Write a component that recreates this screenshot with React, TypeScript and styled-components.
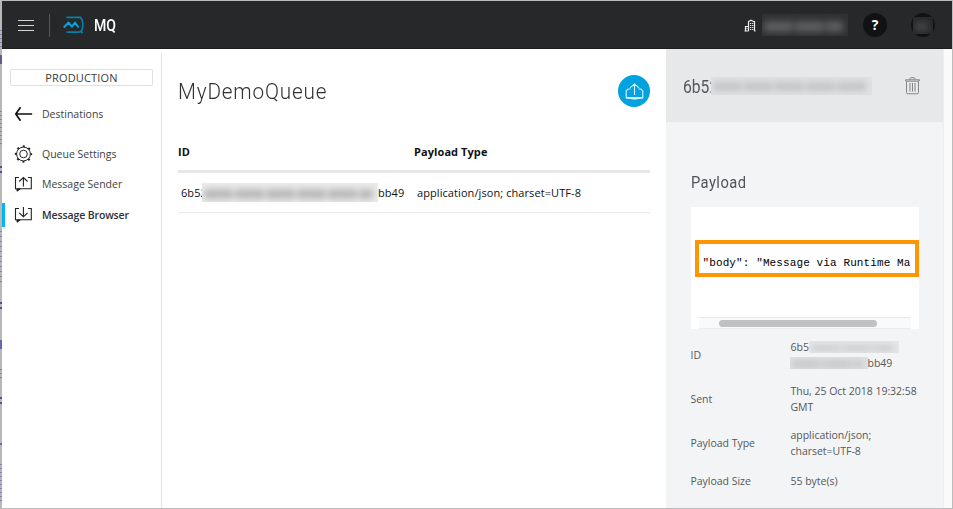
import React from 'react';
import styled, { createGlobalStyle, css } from 'styled-components';

const Global = createGlobalStyle`
  *, *::before, *::after { box-sizing: border-box; }
  html, body { margin: 0; padding: 0; overflow: hidden; }
  body { font-family: "Open Sans", "Noto Sans", sans-serif; font-size: 11px; color: #3a3b3c; background: #fff; }
  svg { display: block; flex: none; }
`;

const Frame = styled.div`
  width: 953px;
  height: 509px;
  display: grid;
  grid-template-columns: 2px 950px 1px;
  grid-template-rows: 1px 507px 1px;
  background: #bcbcbc;
`;
const Edge = styled.div`
  grid-row: 2;
  background:
    linear-gradient(#54509a, #54509a) 0 301px / 2px 2px no-repeat,
    linear-gradient(#54509a, #54509a) 0 306px / 2px 2px no-repeat,
    linear-gradient(#6668ae, #6668ae) 0 339px / 2px 9px no-repeat,
    linear-gradient(#54509a, #54509a) 0 396px / 2px 2px no-repeat,
    linear-gradient(#54509a, #54509a) 0 401px / 2px 2px no-repeat,
    linear-gradient(#6a68a0, #6a68a0) 0 442px / 2px 2px no-repeat,
    repeating-linear-gradient(#8582ad 0 1px, #b5b5b8 1px 4px) 0 463px / 2px 38px no-repeat,
    repeating-linear-gradient(#8582ad 0 1px, #b5b5b8 1px 4px) 0 368px / 2px 12px no-repeat,
    repeating-linear-gradient(#8582ad 0 1px, #b5b5b8 1px 5px) 0 230px / 2px 54px no-repeat,
    linear-gradient(#54509a, #54509a) 0 165px / 2px 2px no-repeat,
    linear-gradient(#54509a, #54509a) 0 170px / 2px 2px no-repeat,
    repeating-linear-gradient(#8582ad 0 1px, #b5b5b8 1px 4px) 0 110px / 2px 36px no-repeat,
    linear-gradient(#5f5a9c, #5f5a9c) 0 54px / 2px 9px no-repeat,
    repeating-linear-gradient(#8582ad 0 1px, #b5b5b8 1px 4px) 0 29px / 2px 20px no-repeat,
    #b8b8b8;
`;
const Window = styled.div`
  grid-column: 2;
  grid-row: 2;
  display: grid;
  grid-template-rows: 48px 459px;
  background: #fff;
`;
const Header = styled.header`
  display: flex;
  align-items: center;
  background: #27282a;
  border-bottom: 1px solid #1d1d1e;
  padding-left: 16px;
  color: #fff;
`;
const Divider = styled.div`
  width: 1px;
  height: 23px;
  margin: 1px 13px 0 15px;
  background: #56575a;
`;
const Brand = styled.span`
  margin-left: 10px;
  font: 500 16px/20px Roboto, sans-serif;
  transform: scaleX(0.88);
  transform-origin: left;
  padding-top: 3px;
`;
const Tools = styled.div`
  display: flex;
  align-items: center;
  margin-left: auto;
  padding: 1px 17px 0 0;
`;
const Circle = styled.div<{ $left?: number }>`
  width: 24px;
  height: 24px;
  margin-left: ${p => p.$left ?? 0}px;
  border-radius: 50%;
  background: #111213;
  display: flex;
  align-items: center;
  justify-content: center;
  font: 700 14px/24px "Open Sans", sans-serif;
  color: #fff;
`;

const Redaction = styled.span<{ $w: number; $h: number; $bg: string; $ink: string; $left?: number; $right?: number }>`
  display: inline-block;
  flex: none;
  position: relative;
  width: ${p => p.$w}px;
  height: ${p => p.$h}px;
  margin-left: ${p => p.$left ?? 0}px;
  margin-right: ${p => p.$right ?? 0}px;
  overflow: hidden;
  background: ${p => p.$bg};
  &::before {
    content: "";
    display: block;
    height: ${p => Math.round(p.$h * 0.5)}px;
    margin: ${p => Math.round(p.$h * 0.3)}px 5px 0 2px;
    background: repeating-linear-gradient(90deg, ${p => p.$ink} 0 29px, transparent 29px 31px);
    filter: blur(3px);
  }
`;

const Columns = styled.div`
  display: grid;
  grid-template-columns: 160px 504px 278px 8px;
`;
const Sidebar = styled.nav`
  margin-top: 4px;
  padding-top: 16px;
  border-right: 1px solid #e3e4e5;
  font-size: 10.5px;
`;
const Environment = styled.div`
  width: 143px;
  height: 17px;
  margin: 0 0 16px 8px;
  border: 1px solid #dfe0e1;
  border-radius: 2px;
  text-align: center;
  font-size: 11px;
  line-height: 15px;
  letter-spacing: 0.15px;
`;
const NavItem = styled.a<{ $active?: boolean; $gap?: number }>`
  display: flex;
  align-items: center;
  height: 24px;
  margin-bottom: ${p => p.$gap ?? 6}px;
  padding-left: ${p => (p.$active ? 9 : 12)}px;
  gap: 9px;
  color: #3e3f41;
  ${p => p.$active && css`
    border-left: 3px solid #00b5f1;
    font-weight: 600;
    letter-spacing: -0.12px;
    color: #303133;
  `}
`;

const Main = styled.main`
  padding: 26px 16px 0;
`;
const TitleRow = styled.div`
  display: flex;
  align-items: center;
  justify-content: space-between;
  height: 32px;
`;
const Title = styled.h1`
  margin: 2px 0 0;
  font: 300 22px/32px Roboto, sans-serif;
  letter-spacing: 0.9px;
  transform: scaleX(0.94);
  transform-origin: left;
  color: #303133;
`;
const Action = styled.button`
  width: 32px;
  height: 32px;
  padding: 0;
  border: 0;
  border-radius: 50%;
  background: #00a2df;
  display: flex;
  align-items: center;
  justify-content: center;
`;
const Row = styled.div<{ $head?: boolean }>`
  display: grid;
  grid-template-columns: 236px 1fr;
  align-items: center;
  letter-spacing: 0.08px;
  color: #111;
  ${p => p.$head ? css`
    height: 39px;
    margin-top: 27px;
    padding-bottom: 1px;
    border-bottom: 3px solid #e7e7e7;
    font-weight: 700;
  ` : css`
    height: 40px;
    padding-left: 3px;
    border-bottom: 1px solid #e9e9e9;
  `}
`;
const Inline = styled.span`
  display: flex;
  align-items: center;
  white-space: nowrap;
`;

const Panel = styled.aside`
  background: #f3f4f6;
  border-right: 1px solid #eeeff0;
`;
const PanelHead = styled.div`
  display: flex;
  align-items: center;
  height: 73px;
  padding: 0 23px 0 17px;
  background: #e7e8ea;
  color: #55575a;
  & > svg { margin-left: auto; }
`;
const Condensed = styled.span`
  width: 34px;
  padding-top: 3px;
  font: 400 18px/24px Roboto, sans-serif;
  transform: scaleX(0.87);
  transform-origin: left;
`;
const PanelBody = styled.div`
  padding: 49px 24px 0;
`;
const SubTitle = styled.h2`
  margin: 0 0 12px;
  padding-left: 1px;
  font: 400 16px/24px Roboto, sans-serif;
  letter-spacing: 0.5px;
  transform: scaleX(0.92);
  transform-origin: left;
  color: #515356;
`;
const CodeBox = styled.div`
  display: flex;
  flex-direction: column;
  width: 228px;
  height: 122px;
  margin-left: 1px;
  padding-top: 33px;
  background: #fff;
`;
const CodeLine = styled.code`
  width: 224px;
  height: 37px;
  margin-left: 4px;
  border: 4px solid #ff9500;
  padding: 1px 0 0 3.5px;
  font: 11px/36px "Liberation Mono", monospace;
  letter-spacing: 0.11px;
  white-space: pre;
  color: #000;
`;
const ScrollTrack = styled.div`
  width: 212px;
  height: 12px;
  margin: auto 0 0 8px;
  padding: 2px 0 0 20px;
  background: #fafafa;
  border-top: 1px solid #e7e7e7;
  border-bottom: 1px solid #ececec;
`;
const ScrollThumb = styled.div`
  width: 158px;
  height: 7px;
  border-radius: 4px;
  background: #c1c1c1;
`;
const Details = styled.dl`
  display: grid;
  grid-template-columns: 100px 1fr;
  row-gap: 12px;
  align-items: center;
  margin: 10px 0 0 0.5px;
  font-size: 10.5px;
  letter-spacing: -0.02px;
  line-height: 16px;
  color: #55575a;
  & > :nth-last-child(-n + 2) { padding-top: 2px; }
`;
const Term = styled.dt``;
const Value = styled.dd`
  margin: 0;
  white-space: nowrap;
`;
const Gutter = styled.div`
  background: #fafafa;
`;

const MenuIcon = () => (
  <svg width="16" height="14" viewBox="0 0 16 14" stroke="#d4d4d5" strokeWidth="1"><path d="M0 2.5h16M0 7.5h16M0 12.5h16" /></svg>
);
const LogoIcon = () => (
  <svg width="21" height="20" viewBox="0 0 21 20" fill="none">
    <path d="M3.5 2.3h14Q19.8 4.5 19.8 9.5t-1.6 6.6l1.2 2.3M3.5 17.2h12.3q1.6 0 2.4-1.1" stroke="#087ea8" strokeWidth="1.7" />
    <path d="M.7 12.5 5.5 7.6l3.4 4.1L12 7.6l3.6 4.9" stroke="#00a8e8" strokeWidth="1.9" strokeLinejoin="round" />
  </svg>
);
const BuildingIcon = () => (
  <svg width="12" height="13" viewBox="0 0 12 13" fill="none" stroke="#ededed">
    <path d="M4.5 12V2.5L7 1.2l2.5 1.3h1V12M1.5 12V7.5h3M.5 12h4M10 12h1.5" strokeWidth="1.2" />
    <path d="M6 4.5h3.5M6 6.5h3.5M6 8.5h3.5M6 10.5h3.5" strokeDasharray="1.3 .8" />
    <path d="M3 9v1" />
  </svg>
);
const BackIcon = () => (
  <svg width="19" height="16" viewBox="0 0 19 16" fill="none" stroke="#111" strokeWidth="1.7"><path d="M6.5 1.2 1.8 8l4.7 6.8M1.6 8h16.6" /></svg>
);
const GearIcon = () => (
  <svg width="19" height="18" viewBox="0 0 19 18" fill="none" stroke="#222">
    <circle cx="9.5" cy="9" r="6.9" />
    <circle cx="9.5" cy="9" r="3.8" />
    <circle cx="9.5" cy="9" r="7.8" strokeWidth="1.7" strokeDasharray="2.1 4.026" strokeDashoffset="1.05" />
  </svg>
);
const MessageIcon = ({ down }: { down?: boolean }) => (
  <svg width="19" height="18" viewBox="0 0 19 18" fill="none" stroke="#222">
    <path d="M5 2.5H1.5v11.2h15.8V2.5H14" strokeWidth="1.1" />
    <path d="M3 14v2.2l3.2-2.2Z" fill="#111" />
    {down ? <path d="M9.4 1v9.5M5.2 6.8l4.2 3.9 4.2-3.9" strokeWidth="1.1" /> : <path d="M9.4 11.5V2.5M5.2 6.5l4.2-3.9 4.2 3.9" strokeWidth="1.1" />}
  </svg>
);
const SendIcon = () => (
  <svg width="19" height="19" viewBox="0 0 19 19" fill="none" stroke="#d9f3fd">
    <path d="M9.5 13V2M5 5.8 9.5 2 14 5.8M5.5 7H3.2L1.2 8.7v7.1h16.6V8.7l-2-1.7h-2.3" strokeWidth="1.1" />
    <path d="M1.2 15.8q8.3 2.8 16.6 0Z" fill="#d9f3fd" />
  </svg>
);
const TrashIcon = () => (
  <svg width="15" height="18" viewBox="0 0 15 18" fill="none" stroke="#858688">
    <path d="M.5 2.8h14M5 2.3q0-1.6 1-1.6h3q1 0 1 1.6M.5 2.8l.5 1.4h13l.5-1.4M1.5 4.5v11q0 1.3 1.5 1.3h9q1.5 0 1.5-1.3v-11" />
    <path d="M5 6v8.5M7.5 6v8.5M10 6v8.5" />
  </svg>
);

export default function App() {
  return (
    <Frame>
      <Global />
      <Edge />
      <Window>
        <Header>
          <MenuIcon />
          <Divider />
          <LogoIcon />
          <Brand>MQ</Brand>
          <Tools>
            <BuildingIcon />
            <Redaction $w={86} $h={22} $bg="#303133" $ink="#5b5c5e" $left={6} $right={15} />
            <Circle>?</Circle>
            <Circle $left={24}>
              <Redaction $w={20} $h={17} $bg="#27282a" $ink="#434446" />
            </Circle>
          </Tools>
        </Header>
        <Columns>
          <Sidebar>
            <Environment>PRODUCTION</Environment>
            <NavItem $gap={16}><BackIcon />Destinations</NavItem>
            <NavItem><GearIcon />Queue Settings</NavItem>
            <NavItem $gap={7}><MessageIcon />Message Sender</NavItem>
            <NavItem $active><MessageIcon down />Message Browser</NavItem>
          </Sidebar>
          <Main>
            <TitleRow>
              <Title>MyDemoQueue</Title>
              <Action aria-label="Send message"><SendIcon /></Action>
            </TitleRow>
            <Row $head><span>ID</span><span>Payload Type</span></Row>
            <Row>
              <Inline>6b52<Redaction $w={176} $h={19} $bg="#ebebeb" $ink="#b9b9b9" $left={-5} />bb49</Inline>
              <span>application/json; charset=UTF-8</span>
            </Row>
          </Main>
          <Panel>
            <PanelHead>
              <Condensed>6b52</Condensed>
              <Redaction $w={161} $h={18} $bg="#e0e1e3" $ink="#c4c5c7" $left={-6} />
              <TrashIcon />
            </PanelHead>
            <PanelBody>
              <SubTitle>Payload</SubTitle>
              <CodeBox>
                <CodeLine>"body": "Message via Runtime Ma</CodeLine>
                <ScrollTrack><ScrollThumb /></ScrollTrack>
              </CodeBox>
              <Details>
                <Term>ID</Term>
                <Value>
                  <Inline>6b5<Redaction $w={90} $h={12} $bg="#e6e7e9" $ink="#cbccce" /></Inline>
                  <Inline><Redaction $w={78} $h={12} $bg="#dfe0e2" $ink="#c2c3c5" $left={-1} />bb49</Inline>
                </Value>
                <Term>Sent</Term>
                <Value>Thu, 25 Oct 2018 19:32:58<br />GMT</Value>
                <Term>Payload Type</Term>
                <Value>application/json;<br />charset=UTF-8</Value>
                <Term>Payload Size</Term>
                <Value>55 byte(s)</Value>
              </Details>
            </PanelBody>
          </Panel>
          <Gutter />
        </Columns>
      </Window>
    </Frame>
  );
}
